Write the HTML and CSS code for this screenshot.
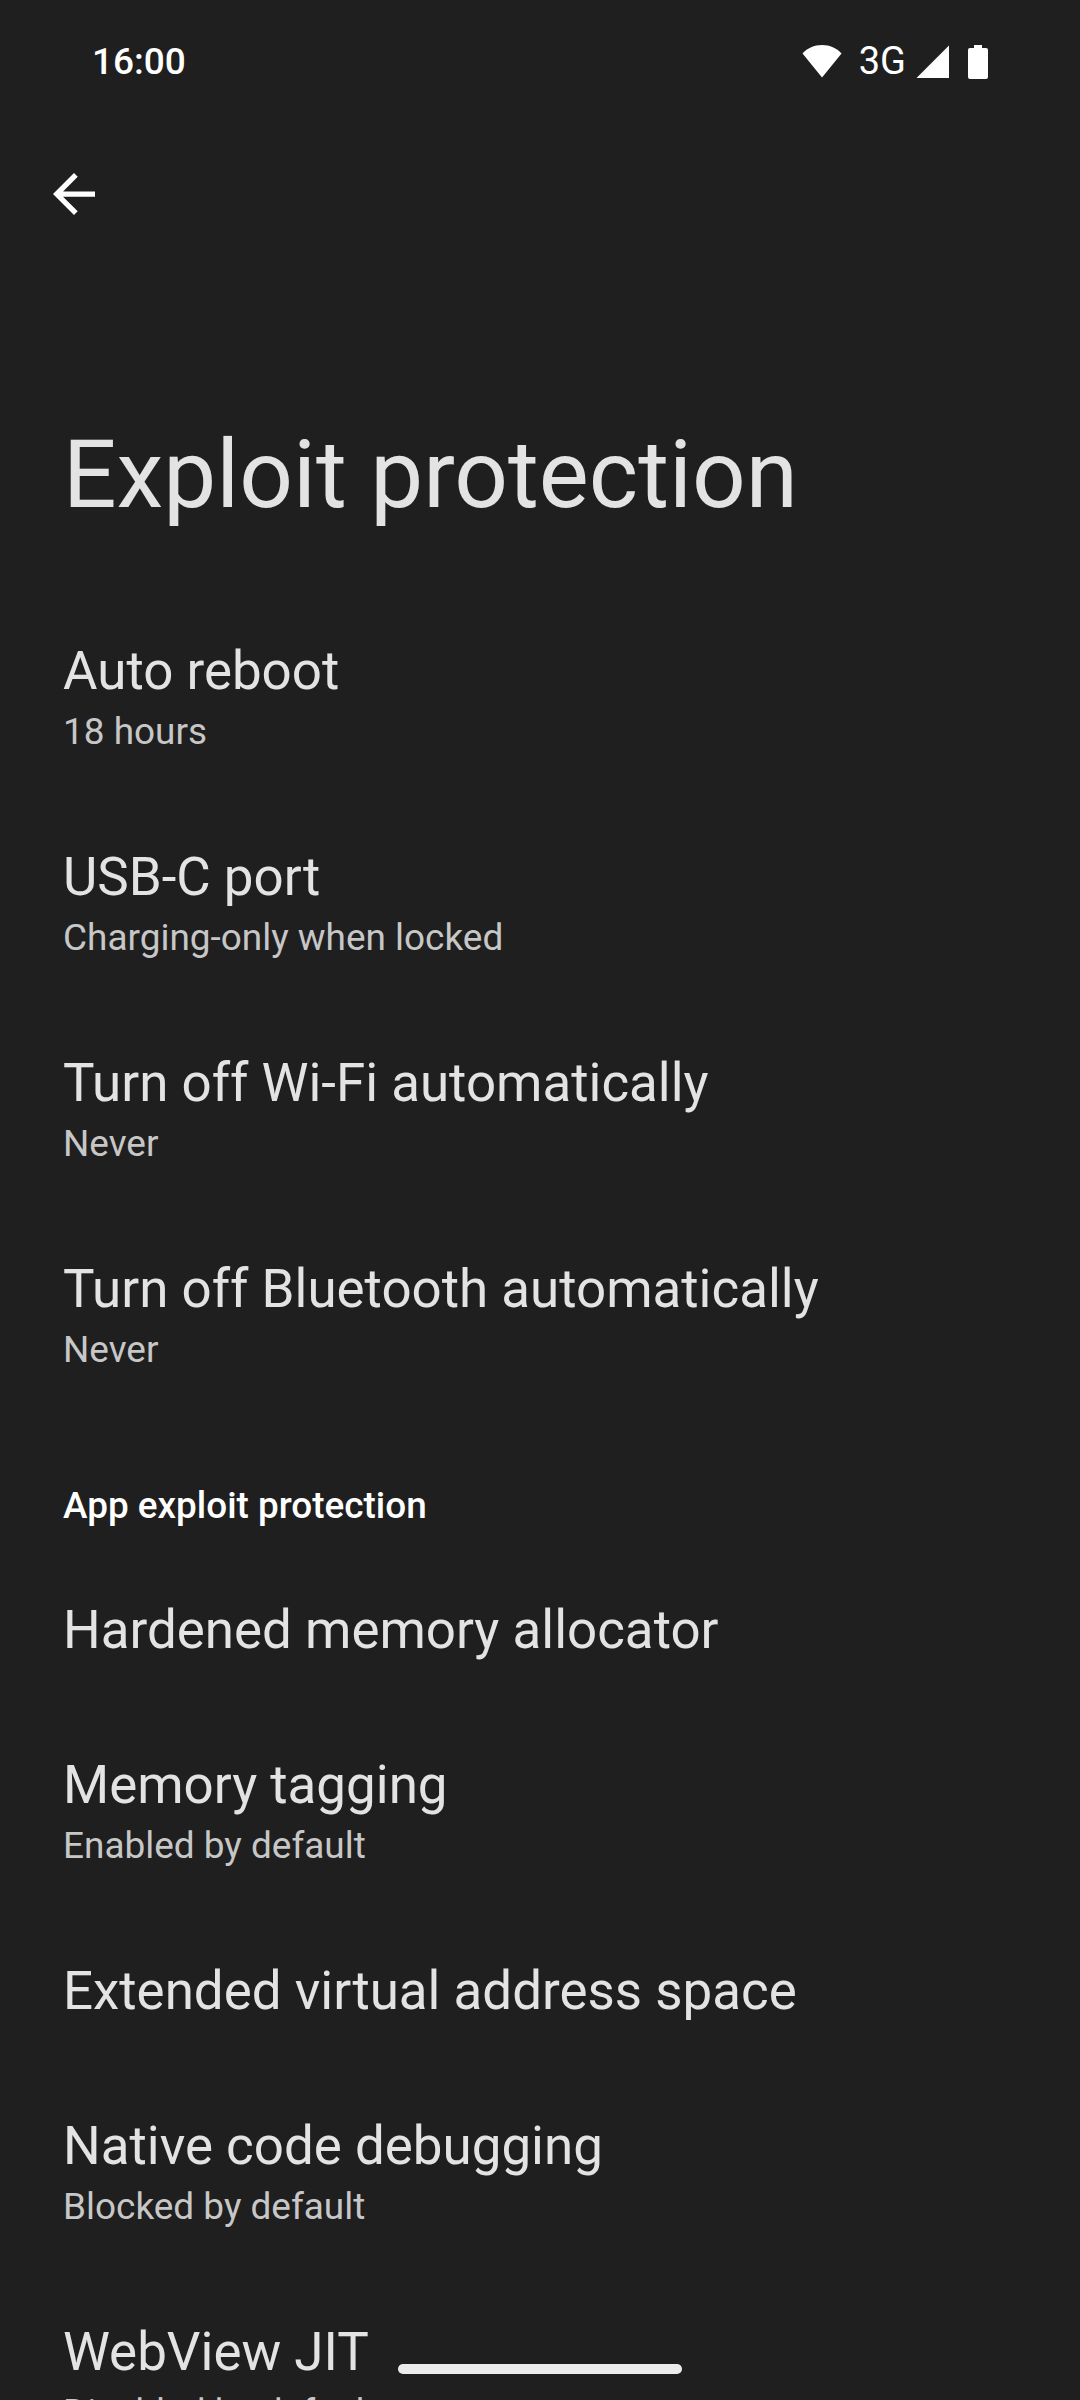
FILE: index.html
```html
<!DOCTYPE html>
<html lang="en">
<head>
<meta charset="utf-8">
<title>Exploit protection</title>
<link rel="stylesheet" href="styles.css">
</head>
<body>
<div class="screen">
  <header class="status">
    <span class="clock">16:00</span>
    <div class="indicators">
      <svg class="wifi" width="40" height="34" viewBox="0 0 40 34"><path d="M20 33.500 0.500 9.500C5.500 4 12 1 20 1s14.500 3 19.500 8.500z"/></svg>
      <span class="network">3G</span>
      <svg class="signal" width="33" height="33" viewBox="0 0 33 33"><path d="M0.500 33 33 0.500v32.500z"/></svg>
      <svg class="battery" width="20" height="34" viewBox="0 0 20 34"><path d="M6 0h8v3h4q2 0 2 2v27q0 2-2 2H2q-2 0-2-2V5q0-2 2-2h4z"/></svg>
    </div>
  </header>
  <nav class="toolbar">
    <svg class="back" width="42" height="42" viewBox="4 4 16 16"><path d="M20 11H7.830l5.590-5.590L12 4l-8 8 8 8 1.410-1.410L7.830 13H20z"/></svg>
  </nav>
  <h1 class="title">Exploit protection</h1>
  <main class="list">
    <section class="item"><h2>Auto reboot</h2><p>18 hours</p></section>
    <section class="item"><h2>USB-C port</h2><p>Charging-only when locked</p></section>
    <section class="item"><h2>Turn off Wi-Fi automatically</h2><p>Never</p></section>
    <section class="item"><h2>Turn off Bluetooth automatically</h2><p>Never</p></section>
    <h3 class="category">App exploit protection</h3>
    <section class="item"><h2>Hardened memory allocator</h2></section>
    <section class="item"><h2>Memory tagging</h2><p>Enabled by default</p></section>
    <section class="item"><h2>Extended virtual address space</h2></section>
    <section class="item"><h2>Native code debugging</h2><p>Blocked by default</p></section>
    <section class="item"><h2>WebView JIT</h2><p>Disabled by default</p></section>
  </main>
  <div class="home-bar"></div>
</div>
</body>
</html>
```

FILE: styles.css
```css
* { box-sizing: border-box; margin: 0; padding: 0; }
body { background: #1f1f1f; font-family: Roboto, sans-serif; color: #e3e3e3; }
.screen { position: relative; width: 1080px; height: 2400px; overflow: hidden; background: #1f1f1f; }
.status { display: flex; justify-content: space-between; align-items: center; height: 122px; padding: 0 92px; color: #fff; }
.clock { font-size: 37px; font-weight: 500; }
.indicators { display: flex; align-items: center; fill: #fff; }
.network { margin-left: 17px; font-size: 38px; }
.signal { margin-left: 10px; }
.battery { margin: 1px 0 0 19px; }
.toolbar { display: flex; align-items: center; height: 146px; padding: 0 52.700px 1.400px; fill: #fff; }
.title { height: 325px; padding: 151px 63px 0; font-size: 94.300px; line-height: 112px; font-weight: 400; white-space: nowrap; }
.item { padding: 43px 63px 41px; }
.item h2 { font-size: 52.900px; line-height: 71px; font-weight: 400; }
.item p { padding-bottom: 2px; font-size: 36.950px; line-height: 49px; color: #c7c7c7; }
.category { padding: 64px 63px 21px; font-size: 36.900px; line-height: 50px; font-weight: 500; color: #fff; }
.home-bar { position: absolute; left: 398px; top: 2364px; width: 284px; height: 10px; border-radius: 5px; background: #ececec; }
```
